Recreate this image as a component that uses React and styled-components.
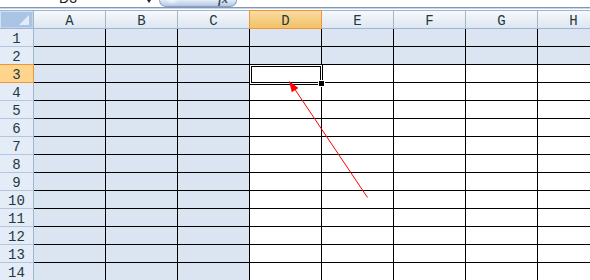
import React from 'react';
import styled, {createGlobalStyle, css} from 'styled-components';

const GlobalStyle = createGlobalStyle`
  html, body {
    margin: 0;
    padding: 0;
    background: #fff;
    overflow: hidden;
  }
`;

const COLS = ['A', 'B', 'C', 'D', 'E', 'F', 'G', 'H'];
const ROWS = Array.from({length: 14}, (_, i) => i + 1);
const ACTIVE_COL = 'D';
const ACTIVE_ROW = 3;

const Page = styled.div`
  position: relative;
  width: 590px;
  height: 280px;
  overflow: hidden;
  background: #fff;
  font-family: "Liberation Mono", "DejaVu Sans Mono", monospace;
`;

/* formula bar, only its bottom edge is visible */
const FormulaBar = styled.div`
  display: flex;
  height: 7px;
  overflow: hidden;
  border-bottom: 1px solid #7f96b6;
  box-shadow: 0 1px 0 #c9d6e8;
`;

const NameBox = styled.div`
  position: relative;
  width: 159px;
  flex: none;
`;

const NameText = styled.span`
  display: block;
  width: 136px;
  text-align: center;
  font-family: "Liberation Sans", Arial, sans-serif;
  font-size: 14px;
  line-height: 14px;
  margin-top: -9px;
  color: #1b1b1b;
`;

const DropTip = styled.span`
  position: absolute;
  left: 147px;
  top: 0;
  width: 0;
  height: 0;
  border-left: 2px solid transparent;
  border-right: 2px solid transparent;
  border-top: 3px solid #222;
`;

const FxButton = styled.div`
  width: 78px;
  height: 7px;
  flex: none;
  box-sizing: border-box;
  display: flex;
  justify-content: flex-end;
  padding-right: 8px;
  border: 1px solid #8aa2c2;
  border-top: none;
  border-radius: 0 0 9px 9px;
  background:
    radial-gradient(circle at 12px -2px, rgba(255,255,255,0.95) 0, rgba(255,255,255,0) 7px),
    linear-gradient(#e4ecf7, #b4c8e4);
`;

const FxText = styled.i`
  font-family: "Liberation Serif", "Times New Roman", serif;
  font-size: 12px;
  line-height: 12px;
  margin-top: -7px;
  font-weight: bold;
  color: #3b4a5c;
`;

const FormulaInput = styled.div`
  flex: 1;
  background: #fff;
`;

const Spacer = styled.div`
  height: 2px;
`;

const Sheet = styled.div`
  display: grid;
  grid-template-columns: 34px repeat(${COLS.length}, 72px);
  grid-auto-rows: 18px;
  grid-template-rows: 19px;
`;

const headerText = css`
  display: flex;
  align-items: center;
  justify-content: center;
  box-sizing: border-box;
  padding-top: 2px;
  font-size: 14px;
  color: #22393f;
`;

const Corner = styled.div`
  position: relative;
  box-sizing: border-box;
  border-top: 1px solid #9eb6ce;
  border-bottom: 1px solid #9eb6ce;
  border-right: 1px solid #9eb6ce;
  background: #aac4e6;
  box-shadow: inset 1px 1px 0 #d4e1f2, inset -1px -1px 0 #c2d4ec;

  svg {
    position: absolute;
    right: 3px;
    bottom: 2px;
  }
`;

const ColHeader = styled.div`
  ${headerText};
  border-top: 1px solid #9eb6ce;
  border-bottom: 1px solid #9eb6ce;
  border-right: 1px solid #9eb6ce;
  background: linear-gradient(#f7f9fc, #dde6f1);

  ${p => p.$active && css`
    background: linear-gradient(#f9dba1, #f2c266);
    border-color: #f2953a;
    box-shadow: -1px 0 0 #f2953a;
  `}
`;

const RowHeader = styled.div`
  ${headerText};
  border-right: 1px solid #9eb6ce;
  border-bottom: 1px solid #b3c6de;
  background: #e4ecf7;

  ${p => p.$active && css`
    background: #ffd58e;
    border-color: #f2953a;
    box-shadow: 0 -1px 0 #f2953a;
  `}
`;

const Cell = styled.div`
  box-sizing: border-box;
  border-right: 1px solid #000;
  border-bottom: 1px solid #000;
  background: ${p => (p.$shaded ? '#dbe5f1' : '#fff')};
`;

const Selection = styled.div`
  position: absolute;
  left: 249px;
  top: 64px;
  width: 74px;
  height: 21px;
  box-sizing: border-box;
  border: 1px solid #000;
  box-shadow: inset 0 0 0 1px #fff, inset 0 0 0 2px #000;
  pointer-events: none;
`;

const FillHandle = styled.div`
  position: absolute;
  left: 319px;
  top: 81px;
  width: 5px;
  height: 5px;
  background: #000;
  border: 1px solid #fff;
  box-sizing: content-box;
  margin: -1px 0 0 -1px;
`;

const ArrowLayer = styled.svg`
  position: absolute;
  left: 0;
  top: 0;
  pointer-events: none;
`;

function CornerTriangle() {
  return (
    <svg width="11" height="11" viewBox="0 0 11 11">
      <polygon points="10,0 10,10 0,10" fill="#e3ebf5" />
    </svg>
  );
}

function isShaded(col, row) {
  return ['A', 'B', 'C'].includes(col) || row <= 2;
}

export default function App() {
  return (
    <Page>
      <GlobalStyle />
      <FormulaBar>
        <NameBox>
          <NameText>D3</NameText>
          <DropTip />
        </NameBox>
        <FxButton>
          <FxText>fx</FxText>
        </FxButton>
        <FormulaInput />
      </FormulaBar>
      <Spacer />

      <Sheet>
        <Corner>
          <CornerTriangle />
        </Corner>
        {COLS.map(c => (
          <ColHeader key={c} $active={c === ACTIVE_COL}>{c}</ColHeader>
        ))}
        {ROWS.map(r => (
          <React.Fragment key={r}>
            <RowHeader $active={r === ACTIVE_ROW}>{r}</RowHeader>
            {COLS.map(c => (
              <Cell key={c + r} $shaded={isShaded(c, r)} />
            ))}
          </React.Fragment>
        ))}
      </Sheet>

      <Selection />
      <FillHandle />

      <ArrowLayer width="590" height="280">
        <line x1="367.5" y1="197.5" x2="294" y2="88" stroke="#ff0000" strokeWidth="1" />
        <polygon points="289,81 298.4,87.9 291.8,92.3" fill="#ff0000" />
      </ArrowLayer>
    </Page>
  );
}
